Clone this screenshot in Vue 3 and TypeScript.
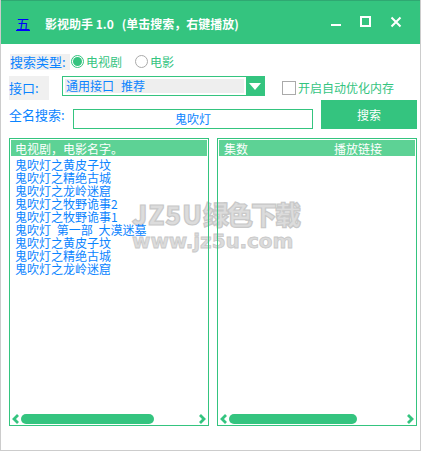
<script setup lang="ts">
const movies: string[] = [
  '鬼吹灯之黄皮子坟',
  '鬼吹灯之精绝古城',
  '鬼吹灯之龙岭迷窟',
  '鬼吹灯之牧野诡事2',
  '鬼吹灯之牧野诡事1',
  '鬼吹灯 第一部 大漠迷墓',
  '鬼吹灯之黄皮子坟',
  '鬼吹灯之精绝古城',
  '鬼吹灯之龙岭迷窟',
]
</script>

<template>
  <div class="win">
    <div class="watermark" aria-hidden="true">
      <div class="wm-a"><span class="wm-latin">JZ5U</span><span class="wm-cjk">绿色下载</span></div>
      <div class="wm-b">www.jz5u.com</div>
    </div>
    <header class="titlebar">
      <span class="logo">五</span>
      <span class="title">影视助手 1.0<span class="title-rest">(单击搜索，右键播放)</span></span>
      <div class="controls">
        <svg width="12" height="12" viewBox="0 0 12 12"><rect x="1" y="8" width="10" height="2" fill="#fff" /></svg>
        <svg width="12" height="12" viewBox="0 0 12 12"><rect x="1" y="1" width="9" height="9" fill="none" stroke="#fff" stroke-width="2" /></svg>
        <svg width="12" height="12" viewBox="0 0 12 12"><path d="M1.5 1.5 10.5 10.5M10.5 1.5 1.5 10.5" stroke="#fff" stroke-width="2" fill="none" /></svg>
      </div>
    </header>

    <main class="body">
      <div class="row row-type">
        <span class="label label-type">搜索类型:</span>
        <span class="radio on"><i></i></span>
        <span class="opt">电视剧</span>
        <span class="radio second"></span>
        <span class="opt opt-film">电影</span>
      </div>

      <div class="row row-api">
        <span class="label label-api">接口:</span>
        <div class="combo">
          <span class="combo-text">通用接口<span class="combo-tag">推荐</span></span>
          <span class="combo-btn"><svg width="12" height="7" viewBox="0 0 12 7"><path d="M0 0H12L6 7Z" fill="#fff" /></svg></span>
        </div>
        <span class="check"></span>
        <span class="opt">开启自动优化内存</span>
      </div>

      <div class="row row-search">
        <span class="label label-name">全名搜索:</span>
        <div class="input">鬼吹灯</div>
        <button class="search" type="button">搜索</button>
      </div>

      <div class="lists">
        <section class="list">
          <div class="head"><span>电视剧，电影名字。</span></div>
          <ul class="items">
            <li v-for="(m, i) in movies" :key="i">{{ m }}</li>
          </ul>
          <div class="hscroll">
            <svg width="8" height="10" viewBox="0 0 8 10"><path d="M6 1 2 5 6 9" fill="none" stroke="#34c47f" stroke-width="2.8" /></svg>
            <span class="thumb left-thumb"></span>
            <svg width="8" height="10" viewBox="0 0 8 10"><path d="M2 1 6 5 2 9" fill="none" stroke="#34c47f" stroke-width="2.8" /></svg>
          </div>
        </section>
        <section class="list">
          <div class="head head-split"><span>集数</span><span class="col2">播放链接</span></div>
          <div class="items"></div>
          <div class="hscroll">
            <svg width="8" height="10" viewBox="0 0 8 10"><path d="M6 1 2 5 6 9" fill="none" stroke="#34c47f" stroke-width="2.8" /></svg>
            <span class="thumb right-thumb"></span>
            <svg width="8" height="10" viewBox="0 0 8 10"><path d="M2 1 6 5 2 9" fill="none" stroke="#34c47f" stroke-width="2.8" /></svg>
          </div>
        </section>
      </div>
    </main>
  </div>
</template>

<style>
html, body { margin: 0; overflow: hidden; background: #fff; }
</style>

<style scoped>
.win {
  position: relative;
  width: 421px;
  height: 451px;
  box-sizing: border-box;
  border: 1px solid #ccc;
  border-top: 0;
  background: #fff;
  font-family: "Noto Sans CJK SC", "Liberation Sans", sans-serif;
  font-size: 12px;
  color: #34c47f;
  overflow: hidden;
}
.watermark {
  position: absolute;
  left: 131px;
  top: 197px;
  color: #dcdcdc;
  -webkit-text-stroke: 1.2px #c8c8c8;
  font-family: "Noto Sans CJK SC", "DejaVu Sans", sans-serif;
  font-weight: 900;
  white-space: nowrap;
}
.wm-a { font-size: 26px; line-height: 34px; }
.wm-latin { letter-spacing: 1px; }
.wm-cjk { letter-spacing: -2px; }
.wm-b { font-family: "DejaVu Sans", sans-serif; font-weight: 700; font-size: 20px; line-height: 20px; letter-spacing: -0.1px; -webkit-text-stroke-width: 0.8px; }
.titlebar {
  position: relative;
  height: 44px;
  margin: 0 -1px;
  padding-bottom: 1px;
  box-sizing: border-box;
  background: #34c47f;
  border-top: 1px solid #2fa872;
  display: flex;
  align-items: center;
  color: #fff;
}
.logo {
  width: 15px;
  margin: 2px 0 0 16px;
  color: #0000ff;
  font-size: 14px;
  line-height: 16px;
  text-decoration: underline;
  font-family: "Noto Sans CJK SC", serif;
}
.title {
  margin: 2px 0 0 14px;
  font-size: 12px;
  font-weight: 700;
  white-space: nowrap;
}
.title-rest { margin-left: 8px; }
.controls {
  margin-left: auto;
  margin-right: 19px;
  display: flex;
  gap: 18px;
}
.body {
  position: relative;
  padding: 8px 3px 0 8px;
}
.row { display: flex; align-items: center; }
.label { color: #0a84ff; font-size: 13px; white-space: nowrap; }
.row-type { height: 19px; }
.label-type {
  width: 60px;
  height: 16px;
  line-height: 16px;
  margin-left: 1px;
  background: #f0f0f0;
}
.radio {
  width: 13px;
  height: 13px;
  margin-left: 1px;
  box-sizing: border-box;
  border: 1px solid #aaa;
  border-radius: 50%;
  display: flex;
  align-items: center;
  justify-content: center;
}
.radio.on { border-color: #34c47f; }
.radio.on i { width: 9px; height: 9px; border-radius: 50%; background: #34c47f; }
.radio.second { margin-left: 13px; }
.opt { margin-left: 2px; font-size: 12px; white-space: nowrap; }
.opt-film { width: 24px; overflow: hidden; }
.row-api { height: 25px; margin-top: 5px; align-items: flex-start; }
.label-api {
  width: 40px;
  height: 24px;
  line-height: 24px;
  background: #f0f0f0;
}
.combo {
  width: 203px;
  height: 20px;
  margin-left: 13px;
  box-sizing: border-box;
  border: 1px solid #34c47f;
  display: flex;
}
.combo-text {
  flex: 1;
  margin: 2px;
  padding-left: 1px;
  background: #eeeeee;
  color: #0a84ff;
  font-size: 12px;
  line-height: 14px;
  white-space: nowrap;
}
.combo-tag { margin-left: 7px; }
.combo-btn {
  width: 18px;
  background: #34c47f;
  display: flex;
  align-items: center;
  justify-content: center;
}
.check {
  width: 14px;
  height: 14px;
  margin: 5px 0 0 17px;
  box-sizing: border-box;
  border: 1px solid #aaa;
}
.row-api .opt { margin-top: 3px; }
.row-search { height: 29px; margin-top: -1px; }
.label-name { width: 64px; }
.input {
  width: 240px;
  height: 20px;
  margin-top: 8px;
  box-sizing: border-box;
  border: 1px solid #34c47f;
  color: #0a84ff;
  text-align: center;
  line-height: 18px;
  font-size: 12px;
}
.search {
  width: 96px;
  height: 29px;
  margin-left: 8px;
  padding: 0;
  border: 0;
  background: #34c47f;
  color: #fff;
  font: inherit;
  font-size: 12px;
}
.lists {
  display: flex;
  gap: 8px;
  margin-top: 9px;
}
.list {
  width: 200px;
  height: 288px;
  box-sizing: border-box;
  border: 1px solid #34c47f;
  padding: 1px;
  display: flex;
  flex-direction: column;
}
.head {
  height: 16px;
  padding-left: 4px;
  background: #5dd295;
  color: #fff;
  font-size: 12px;
  line-height: 17px;
  flex: none;
}
.head-split { display: flex; padding-left: 5px; }
.col2 { margin-left: 86px; }
.items {
  flex: 1;
  margin: 2px 0 0;
  padding: 0 0 0 4px;
  list-style: none;
  color: #0a84ff;
  font-size: 12px;
  line-height: 13px;
  word-spacing: 3px;
}
.items li { white-space: pre; }
.hscroll {
  height: 10px;
  flex: none;
  padding: 0 1px;
  display: flex;
  align-items: center;
  justify-content: space-between;
  position: relative;
}
.thumb {
  position: absolute;
  top: 0;
  left: 10px;
  height: 10px;
  border-radius: 5px;
  background: #34c47f;
}
.left-thumb { width: 133px; }
.right-thumb { width: 128px; }
</style>
